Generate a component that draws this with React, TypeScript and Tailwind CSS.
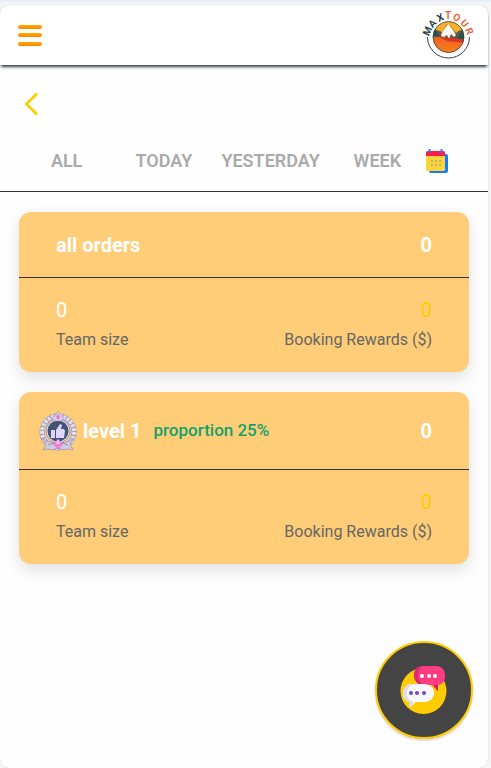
import { useState } from 'react';
import type { ReactNode } from 'react';

const tabs = ['ALL', 'TODAY', 'YESTERDAY', 'WEEK'];

const logoLetters = [
  { char: 'M', x: 5, y: 20, angle: -66, color: '#2b4446' },
  { char: 'A', x: 10, y: 12, angle: -46, color: '#2b4446' },
  { char: 'X', x: 18, y: 6, angle: -24, color: '#2b4446' },
  { char: 'T', x: 26, y: 4, angle: 0, color: '#e2683f' },
  { char: 'O', x: 35, y: 6, angle: 24, color: '#e2683f' },
  { char: 'U', x: 43, y: 12, angle: 48, color: '#e2683f' },
  { char: 'R', x: 48, y: 20, angle: 68, color: '#e2683f' },
];

function Logo() {
  return (
    <svg className="h-12 w-[52px] overflow-visible" viewBox="0 0 52 48" role="img" aria-label="Maxtour">
      <defs>
        <clipPath id="logoScene">
          <circle cx="26.5" cy="26" r="15.5" />
        </clipPath>
        <linearGradient id="logoSand" x1="0" y1="0" x2="0" y2="1">
          <stop offset="0" stopColor="#ed5f27" />
          <stop offset="1" stopColor="#f98516" />
        </linearGradient>
      </defs>
      <g clipPath="url(#logoScene)">
        <rect x="10" y="10" width="34" height="33" fill="#f7b023" />
        <path d="M10 26l5-7 5 2 5-8 4 3 5 6 4-3 6 7v4H10z" fill="#635449" />
        <path d="M20 21l6-8 5 6 3 5-2 2-3-3-2 5-2-4-3 2-3-1z" fill="#fff8ed" />
        <path d="M9 17l4-1 2 5 3 5-9 2zM45 16l-5 1-2 6-3 4 10 3z" fill="#245451" />
        <path d="M10 26c10-1 19 2 34 3v14H10z" fill="url(#logoSand)" />
        <path d="M17 26c8 2 15 0 26 3v3c-11-2-17 0-26-6z" fill="#dc321f" />
      </g>
      <circle cx="26.5" cy="26" r="15.5" fill="none" stroke="#374344" strokeWidth="0.8" />
      <path d="M5.500 26a21 21 0 0 0 42 0" fill="none" stroke="#374344" strokeWidth="1" />
      {logoLetters.map(({ char, x, y, angle, color }) => (
        <text
          key={char}
          transform={`translate(${x} ${y}) rotate(${angle})`}
          y="4"
          textAnchor="middle"
          fontSize="10"
          fontWeight="700"
          fill={color}
        >
          {char}
        </text>
      ))}
    </svg>
  );
}

function MenuIcon() {
  return (
    <svg className="h-6 w-6" viewBox="0 0 24 24" aria-hidden="true">
      <defs>
        <linearGradient id="menuBar" x1="0" y1="0" x2="0" y2="1">
          <stop offset="0" stopColor="#ffae00" />
          <stop offset="1" stopColor="#ff8500" />
        </linearGradient>
      </defs>
      <rect y="2" width="24" height="4" rx="2" fill="url(#menuBar)" />
      <rect y="10" width="24" height="4" rx="2" fill="url(#menuBar)" />
      <rect y="19" width="24" height="4" rx="2" fill="url(#menuBar)" />
    </svg>
  );
}

function CalendarIcon() {
  return (
    <svg className="h-6 w-[22px]" viewBox="0 0 22 24" aria-hidden="true">
      <path d="M3 5h17a2 2 0 0 1 2 2v15a2 2 0 0 1-2 2H5a2 2 0 0 1-2-2z" fill="#117cff" />
      <rect y="2" width="19" height="20" rx="1.5" fill="#ffd43b" />
      <path d="M0 7V4a2 2 0 0 1 2-2h15a2 2 0 0 1 2 2v3z" fill="#fb1c4d" />
      <path d="M3.500 0v4M15.500 0v4" stroke="#347bf5" strokeWidth="2" />
      <path
        d="M5 11h2v2H5zM9 11h2v2H9zM13 11h2v2h-2zM5 15h2v2H5zM9 15h2v2H9zM13 15h2v2h-2z"
        fill="#b3b66d"
      />
    </svg>
  );
}

function MedalIcon() {
  return (
    <svg className="h-10 w-[38px] shrink-0" viewBox="0 0 38 40" aria-hidden="true">
      {/* laurel wreath */}
      <circle cx="19" cy="21" r="16" fill="none" stroke="#9a95b3" strokeWidth="5" />
      <circle cx="19" cy="21" r="16" fill="none" stroke="#e4e0f3" strokeWidth="4" strokeDasharray="3 1" />
      <circle cx="19" cy="20" r="12" fill="#e2def1" stroke="#9b97b5" strokeWidth="1" />
      <circle cx="19" cy="20" r="10.5" fill="#465272" />
      <path d="M12 19h4v8h-4zM17 19l4-6 2 1-1 4h3l1 2-1 7h-8z" fill="#ddd7fb" />
      <path d="M19 0l3 5 3 1-2 4H15l-2-4 3-1z" fill="#d9cbea" stroke="#a79cbb" strokeWidth="0.5" />
      <path d="M19 3l2 3-2 3-2-3z" fill="#ee76cb" />
      {/* ribbon */}
      <path
        d="M3 27c5 4 10 5 16 5s11-1 16-5l-4 6 3 6-6-1-3 1-6-2-6 2-3-1-6 1 3-6z"
        fill="#d0cbe3"
        stroke="#918caa"
        strokeWidth="0.6"
      />
      <path d="M9 34l6-2M29 34l-6-2" stroke="#8782a0" strokeWidth="0.8" />
      <path d="M19 28l5 5-5 6-5-6z" fill="#ed82d3" />
      <path d="M19 28l2 5h-4z" fill="#ffc6ee" />
    </svg>
  );
}

function ChatIcon() {
  return (
    <svg className="h-12 w-12" viewBox="0 0 48 48" aria-hidden="true">
      <circle cx="23.5" cy="25" r="23" fill="#ffcc03" />
      <path d="M23 0h13c6 0 9 4 9 10 0 5-2 8-7 9v6l-6-6h-9c-5 0-9-4-9-10s4-9 9-9z" fill="#ff3b82" />
      <path d="M23 0h2c-5 1-7 5-7 9s2 8 6 10h-1c-5 0-9-4-9-10s4-9 9-9z" fill="#db2c70" />
      <path d="M33 19h5v6z" fill="#da1b63" />
      <path d="M12 18h12c6 0 10 4 10 9s-4 9-10 9h-8l-7 6 1-6c-5-1-7-4-7-9s4-9 9-9z" fill="#f7f8ff" />
      <path d="M12 18h3c-5 1-8 4-8 9s3 8 7 9l-5 6 1-6c-5-1-7-4-7-9s4-9 9-9z" fill="#dcdde7" />
      <g fill="#fff">
        <circle cx="22" cy="10" r="2" />
        <circle cx="29" cy="10" r="2" />
        <circle cx="35" cy="10" r="2" />
      </g>
      <g fill="#7545c4">
        <circle cx="11" cy="27" r="2" />
        <circle cx="17" cy="27" r="2" />
        <circle cx="24" cy="27" r="2" />
      </g>
    </svg>
  );
}

interface OrderCardProps {
  header: ReactNode;
  orders: number;
  teamSize: number;
  rewards: number;
}

function OrderCard({ header, orders, teamSize, rewards }: OrderCardProps) {
  return (
    <section className="overflow-hidden rounded-xl bg-[#ffcc77] shadow-[0_6px_16px_rgba(0,0,0,0.12)]">
      <div className="flex items-center justify-between border-b border-[#333] pr-[37px] text-xl font-bold text-white">
        {header}
        <span>{orders}</span>
      </div>
      <dl className="flex justify-between px-[37px] py-[18px] text-[#666]">
        <div className="flex flex-col-reverse gap-[2px]">
          <dt className="text-base/7">Team size</dt>
          <dd className="text-xl/7 text-white">{teamSize}</dd>
        </div>
        <div className="flex flex-col-reverse gap-[2px] text-right">
          <dt className="text-base/7">Booking Rewards ($)</dt>
          <dd className="text-xl/7 text-[#ffcc00]">{rewards}</dd>
        </div>
      </dl>
    </section>
  );
}

export default function App() {
  const [activeTab, setActiveTab] = useState('');

  return (
    <div className="flex min-h-screen flex-col border-t-2 border-[#e9edf5] bg-[#f5f5f8] pt-[3px] pr-[3px] font-[Roboto,sans-serif]">
      <div className="flex-1 rounded-[10px] bg-[#fefefe] shadow-[0_0_2px_rgba(0,0,0,0.15)]">
        <header className="flex h-[60px] items-center justify-between rounded-t-[10px] bg-white pr-[14px] pl-[18px] shadow-[0_3px_3px_-1px_#374151]">
          <button type="button" aria-label="Menu">
            <MenuIcon />
          </button>
          <a href="#home">
            <Logo />
          </a>
        </header>

        <main>
          <div className="px-6 pt-[27px]">
            <button type="button" aria-label="Back" className="block">
              <svg className="h-6 w-4" viewBox="0 0 16 24" fill="none" aria-hidden="true">
                <path d="M13 1.500L2.500 12 13 22.500" stroke="#ffcc00" strokeWidth="2.800" />
              </svg>
            </button>
          </div>

          <nav className="mt-[15px] grid h-[61px] grid-cols-[97fr_97fr_116fr_97fr_22px] items-center border-b border-[#333] pr-10 pl-[18px] text-lg font-semibold text-[#aaa]">
            {tabs.map((tab) => (
              <button
                key={tab}
                type="button"
                aria-pressed={activeTab === tab}
                onClick={() => setActiveTab(tab)}
              >
                {tab}
              </button>
            ))}
            <button type="button" aria-label="Choose dates">
              <CalendarIcon />
            </button>
          </nav>

          <div className="flex flex-col gap-5 px-[19px] py-5">
            <OrderCard
              header={<h2 className="flex h-[65px] items-center pl-[37px]">all orders</h2>}
              orders={0}
              teamSize={0}
              rewards={0}
            />
            <OrderCard
              header={
                <div className="flex h-[77px] items-center pl-5">
                  <MedalIcon />
                  <h2 className="ml-1.5">level 1</h2>
                  <span className="ml-3 text-[17px] font-medium text-[#12a36d]">proportion 25%</span>
                </div>
              }
              orders={0}
              teamSize={0}
              rewards={0}
            />
          </div>
        </main>
      </div>

      <button
        type="button"
        aria-label="Support chat"
        className="fixed right-[18px] bottom-[29px] flex h-[98px] w-[98px] items-center justify-center rounded-full border-2 border-[#ffcc00] bg-[#444] shadow-[0_2px_2px_rgba(0,0,0,0.15)]"
      >
        <ChatIcon />
      </button>
    </div>
  );
}
